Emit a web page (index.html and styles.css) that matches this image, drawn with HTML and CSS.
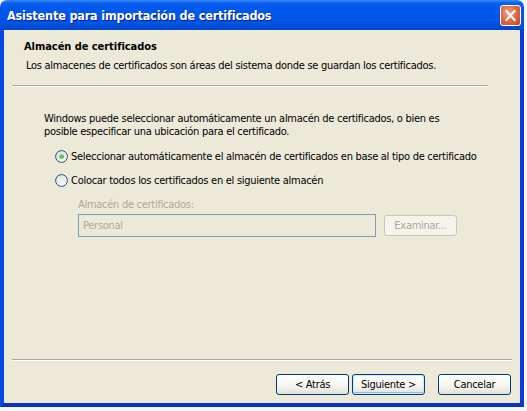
FILE: index.html
```html
<!DOCTYPE html>
<html lang="es">
<head>
<meta charset="utf-8">
<title>Asistente para importación de certificados</title>
<link rel="stylesheet" href="styles.css">
</head>
<body>
<div class="window">
  <div class="titlebar">
    <span class="title">Asistente para importación de certificados</span>
    <button class="close" aria-label="Cerrar">
      <svg width="21" height="21" viewBox="0 0 21 21">
        <path d="M6 5.5 L15 15.5 M15 5.5 L6 15.5" stroke="#fff" stroke-width="2.2" stroke-linecap="square"/>
      </svg>
    </button>
  </div>
  <div class="client">
    <div class="header">
      <div class="h-title">Almacén de certificados</div>
      <div class="h-sub">Los almacenes de certificados son áreas del sistema donde se guardan los certificados.</div>
    </div>
    <div class="hsep"></div>
    <div class="content">
      <p class="intro">Windows puede seleccionar automáticamente un almacén de certificados, o bien es<br>posible especificar una ubicación para el certificado.</p>
      <label class="radio-row first">
        <svg class="radio" width="13" height="13" viewBox="0 0 13 13">
          <defs>
            <linearGradient id="rg1" x1="0" y1="0" x2="1" y2="1">
              <stop offset="0" stop-color="#dcdcd7"/>
              <stop offset="1" stop-color="#ffffff"/>
            </linearGradient>
            <radialGradient id="dot" cx="0.4" cy="0.4" r="0.7">
              <stop offset="0" stop-color="#7ee37e"/>
              <stop offset="1" stop-color="#21a121"/>
            </radialGradient>
          </defs>
          <circle cx="6.5" cy="6.5" r="5.9" fill="url(#rg1)" stroke="#1c5180" stroke-width="1"/>
          <circle cx="6.5" cy="6.5" r="2.3" fill="url(#dot)"/>
        </svg>
        <span>Seleccionar automáticamente el almacén de certificados en base al tipo de certificado</span>
      </label>
      <label class="radio-row">
        <svg class="radio" width="13" height="13" viewBox="0 0 13 13">
          <circle cx="6.5" cy="6.5" r="5.9" fill="url(#rg1)" stroke="#1c5180" stroke-width="1"/>
        </svg>
        <span>Colocar todos los certificados en el siguiente almacén</span>
      </label>
      <div class="store">
        <div class="store-label">Almacén de certificados:</div>
        <div class="store-row">
          <div class="field">Personal</div>
          <div class="btn disabled">Examinar...</div>
        </div>
      </div>
    </div>
    <div class="footer">
      <div class="fsep"></div>
      <div class="buttons">
        <div class="btn nav">&lt; Atrás</div>
        <div class="btn nav default">Siguiente &gt;</div>
        <div class="btn nav cancel">Cancelar</div>
      </div>
    </div>
  </div>
</div>
</body>
</html>
```
FILE: styles.css
```css
html, body {
  margin: 0;
  padding: 0;
}
body {
  background: #f6f6f6;
  width: 527px;
  height: 411px;
  overflow: hidden;
  font-family: "DejaVu Sans Condensed", "DejaVu Sans", sans-serif;
  font-size: 11px;
  letter-spacing: -0.28px;
  color: #000;
}
.window {
  width: 524px;
  height: 407px;
  display: flex;
  flex-direction: column;
}
.titlebar {
  height: 30px;
  flex: none;
  border-radius: 7px 7px 0 0;
  background: linear-gradient(to bottom, #3d8dff 0px, #0a5ff0 3px, #0058ee 8px, #0056ea 18px, #0052e0 24px, #0047c8 30px);
  display: flex;
  align-items: center;
  padding: 0 3px 0 7px;
}
.title {
  flex: 1;
  color: #fff;
  font-family: "DejaVu Sans Condensed", "DejaVu Sans", sans-serif;
  font-weight: bold;
  font-size: 12.5px;
  letter-spacing: -0.15px;
  text-shadow: 1px 1px 0 #0a1e8c;
  padding-top: 1px;
}
.close {
  width: 21px;
  height: 21px;
  padding: 0;
  margin: 1px 0 0 0;
  border: 1px solid #fff;
  border-radius: 3px;
  background: radial-gradient(circle at 40% 35%, #f1a58c 0%, #e36b48 45%, #c94621 100%);
  display: flex;
  align-items: center;
  justify-content: center;
}
.close svg {
  display: block;
}
.client {
  flex: 1;
  background: #ece9d8;
  border: 4px solid #0a3bd6;
  border-top: none;
  border-left-color: #0b47e4;
  border-right-color: #0a3bd6;
  border-bottom-color: #0a32c4;
  display: flex;
  flex-direction: column;
}
.header {
  padding: 10px 0 0 20px;
  line-height: 13px;
}
.h-title {
  font-weight: bold;
  letter-spacing: -0.05px;
}
.h-sub {
  margin-top: 6px;
  padding-left: 2px;
}
.hsep {
  margin: 13px 0 0 8px;
  width: 476px;
  border-top: 1px solid #aca899;
  border-bottom: 1px solid #fff;
}
.content {
  padding-left: 40px;
  line-height: 13px;
}
.intro {
  margin: 25px 0 0 0;
}
.radio-row {
  display: flex;
  align-items: center;
  gap: 3px;
  margin: 12px 0 0 11px;
  height: 13px;
}
.radio-row + .radio-row {
  margin-top: 11px;
}
.radio {
  display: block;
  flex: none;
}
.store {
  margin: 11px 0 0 34px;
  color: #aca899;
}
.store-label {
  height: 13px;
}
.store-row {
  display: flex;
  align-items: center;
  gap: 8px;
  margin-top: 3px;
}
.field {
  width: 292px;
  height: 21px;
  border: 1px solid #7f9db9;
  padding-left: 4px;
  line-height: 21px;
}
.btn {
  box-sizing: border-box;
  display: flex;
  align-items: center;
  justify-content: center;
  border-radius: 3px;
  height: 21px;
}
.btn.disabled {
  width: 73px;
  border: 1px solid #c9c7ba;
  background: #f5f4ea;
  color: #aca899;
}
.footer {
  margin-top: auto;
}
.fsep {
  margin-left: 8px;
  width: 500px;
  border-top: 1px solid #aca899;
  border-bottom: 1px solid #fff;
}
.buttons {
  display: flex;
  justify-content: flex-end;
  gap: 3px;
  padding: 13px 9px 8px 0;
}
.btn.nav {
  width: 73px;
  border: 1px solid #003c74;
  background: linear-gradient(to bottom, #ffffff 0%, #f4f4ef 60%, #e3e2d8 100%);
  color: #000;
}
.btn.default {
  box-shadow: inset 0 0 0 1px #cee7ff, inset 0 -1px 0 1px #98b8ea;
}
.btn.cancel {
  margin-left: 10px;
}
```
